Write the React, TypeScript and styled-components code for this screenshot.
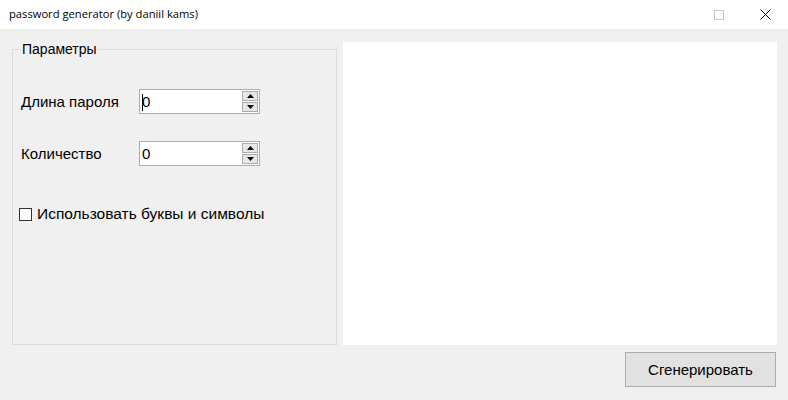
import React from "react";
import styled, { createGlobalStyle } from "styled-components";

const Global = createGlobalStyle`
  html, body { margin: 0; padding: 0; background: #f0f0f0; }
  body { font-family: "Liberation Sans", Arial, sans-serif; }
  * { box-sizing: border-box; }
`;

const Window = styled.div`
  width: 788px;
  height: 400px;
  background: #f0f0f0;
  display: flex;
  flex-direction: column;
  overflow: hidden;
`;

const TitleBar = styled.div`
  height: 29px;
  background: #ffffff;
  display: flex;
  align-items: center;
  padding-left: 9px;
`;

const Title = styled.div`
  flex: 1;
  font-family: "Open Sans", "Noto Sans", sans-serif;
  font-size: 11.2px;
  color: #000;
  padding-bottom: 2px;
`;

const CaptionButton = styled.div`
  width: 46px;
  height: 29px;
  display: flex;
  align-items: center;
  justify-content: center;
`;

const Body = styled.div`
  flex: 1;
  display: grid;
  grid-template-columns: 325px 434px;
  grid-template-rows: 303px 1fr;
  column-gap: 6px;
  padding: 13px 0 0 12px;
`;

const Group = styled.fieldset`
  margin: 0;
  padding: 0 0 0 7px;
  border: 1px solid #dcdcdc;
  height: 303px;
  display: flex;
  flex-direction: column;
  min-width: 0;
`;

const Legend = styled.legend`
  padding: 0 1px;
  margin-left: 1px;
  font-size: 14px;
  color: #000;
  line-height: 15px;
`;

const FieldRow = styled.div<{ $top: number }>`
  display: flex;
  align-items: center;
  margin-top: ${(p) => p.$top}px;
  height: 25px;
`;

const Label = styled.div`
  width: 119px;
  font-size: 15px;
  color: #000;
  padding-left: 1px;
`;

const Spin = styled.div`
  width: 121px;
  height: 25px;
  border: 1px solid #adadad;
  background: #fff;
  display: flex;
  align-items: center;
  padding: 1px;
`;

const SpinValue = styled.div<{ $caret?: boolean }>`
  flex: 1;
  font-size: 15px;
  color: #000;
  padding-left: 1px;
  display: flex;
  align-items: center;
  position: relative;
  &::before {
    content: "";
    display: ${(p) => (p.$caret ? "block" : "none")};
    position: absolute;
    left: 1px;
    top: 1px;
    width: 1px;
    height: 17px;
    background: #000;
  }
`;

const Arrows = styled.div`
  width: 16px;
  height: 21px;
  display: flex;
  flex-direction: column;
  gap: 1px;
`;

const Arrow = styled.div`
  flex: 1;
  background: #e6e6e6;
  border: 1px solid #acacac;
  display: flex;
  align-items: center;
  justify-content: center;
`;

const CheckRow = styled.div`
  display: flex;
  align-items: center;
  margin-top: 39px;
  margin-left: -1px;
`;

const Box = styled.div`
  width: 13px;
  height: 13px;
  border: 1px solid #333;
  background: #fff;
  margin-right: 5px;
`;

const CheckLabel = styled.div`
  font-size: 15.5px;
  color: #000;
`;

const Output = styled.div`
  background: #ffffff;
`;

const Footer = styled.div`
  grid-column: 2;
  display: flex;
  justify-content: flex-end;
  padding-top: 7px;
  padding-right: 1px;
`;

const Button = styled.button`
  width: 151px;
  height: 35px;
  background: #e1e1e1;
  border: 1px solid #adadad;
  font-family: "Liberation Sans", Arial, sans-serif;
  font-size: 15px;
  color: #000;
  padding: 0;
`;

const Up = () => (
  <svg width="7" height="4" viewBox="0 0 7 4">
    <path d="M0 4 L3.5 0 L7 4 Z" fill="#000" />
  </svg>
);
const Down = () => (
  <svg width="7" height="4" viewBox="0 0 7 4">
    <path d="M0 0 L3.5 4 L7 0 Z" fill="#000" />
  </svg>
);

const NumberBox = ({ caret }: { caret?: boolean }) => (
  <Spin>
    <SpinValue $caret={caret}>0</SpinValue>
    <Arrows>
      <Arrow>
        <Up />
      </Arrow>
      <Arrow>
        <Down />
      </Arrow>
    </Arrows>
  </Spin>
);

export default function App() {
  return (
    <Window>
      <Global />
      <TitleBar>
        <Title>password generator (by daniil kams)</Title>
        <CaptionButton />
        <CaptionButton>
          <svg width="10" height="10" viewBox="0 0 10 10">
            <rect x="0.5" y="0.5" width="9" height="9" fill="none" stroke="#c8c8c8" />
          </svg>
        </CaptionButton>
        <CaptionButton>
          <svg width="11" height="11" viewBox="0 0 11 11">
            <path d="M0.5 0.5 L10.5 10.5 M10.5 0.5 L0.5 10.5" stroke="#000" strokeWidth="1" />
          </svg>
        </CaptionButton>
      </TitleBar>
      <Body>
        <Group>
          <Legend>Параметры</Legend>
          <FieldRow $top={32}>
            <Label>Длина пароля</Label>
            <NumberBox caret />
          </FieldRow>
          <FieldRow $top={27}>
            <Label>Количество</Label>
            <NumberBox />
          </FieldRow>
          <CheckRow>
            <Box />
            <CheckLabel>Использовать буквы и символы</CheckLabel>
          </CheckRow>
        </Group>
        <Output />
        <Footer>
          <Button>Сгенерировать</Button>
        </Footer>
      </Body>
    </Window>
  );
}
